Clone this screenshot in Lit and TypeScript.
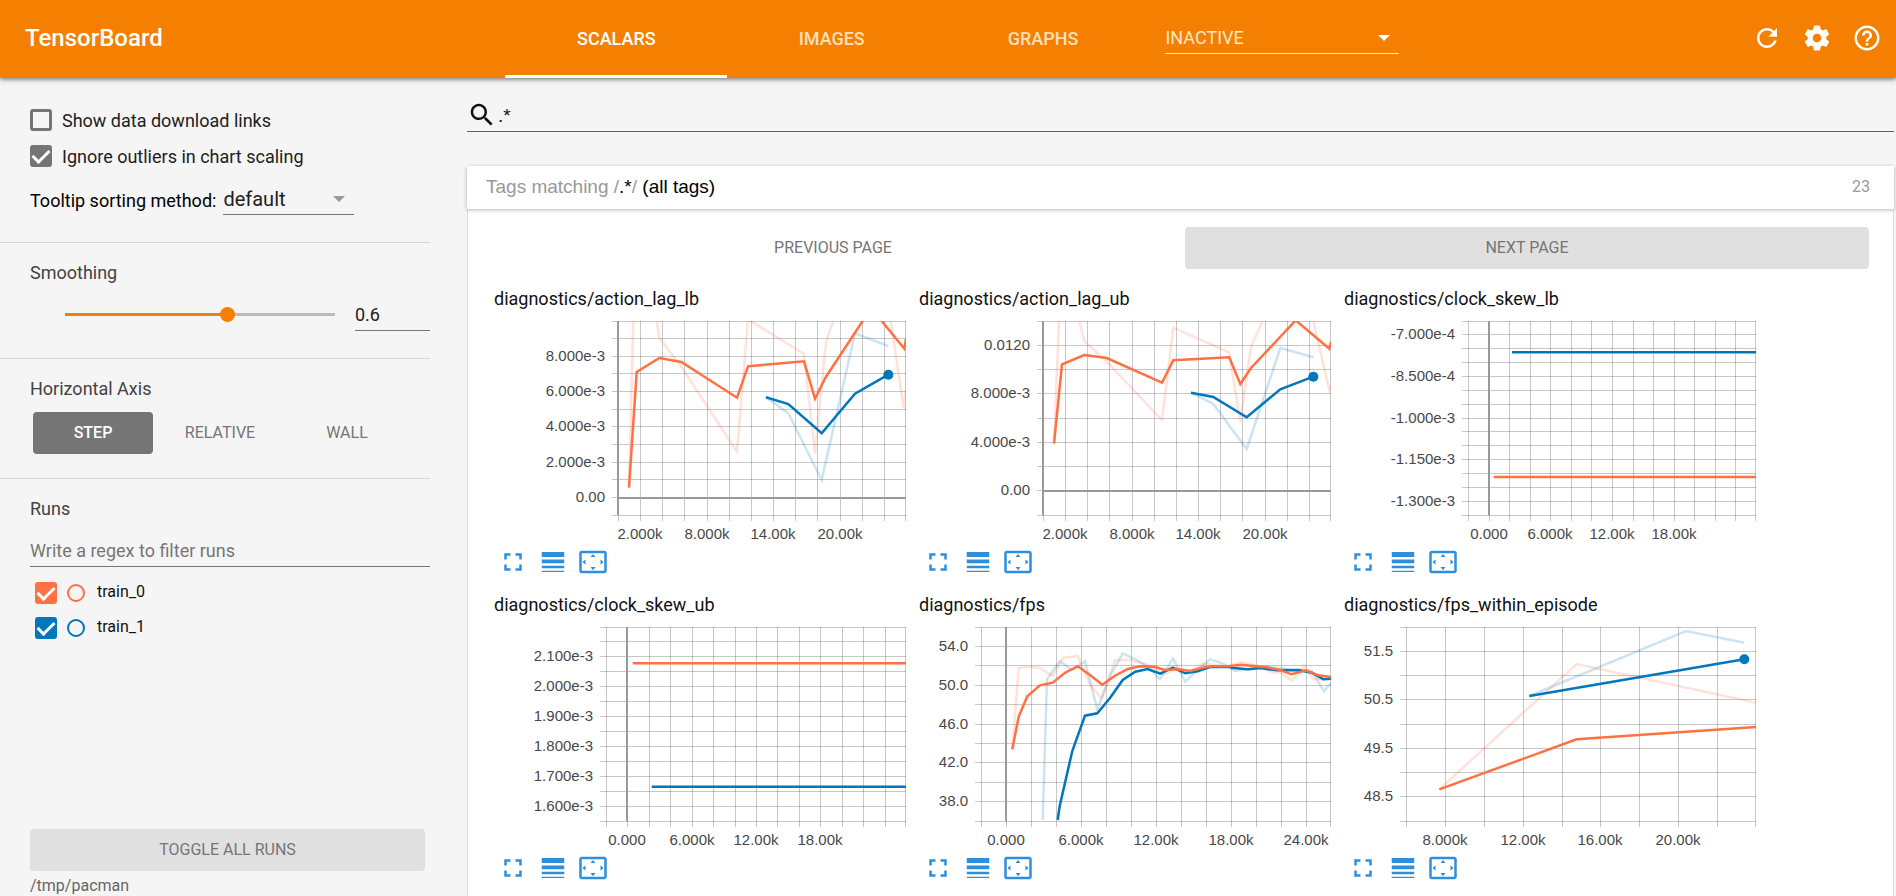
import { LitElement, html, svg, css } from "lit";
import { customElement, property } from "lit/decorators.js";
import { styleMap } from "lit/directives/style-map.js";

type Point = [number, number];

interface Series {
  color: string;
  /** Smoothed line, in thirds of a pixel from the plot frame. */
  line: Point[];
  /** Unsmoothed line, drawn faded under the smoothed one. */
  raw?: Point[];
  dot?: boolean;
}

interface Axis {
  steps: number;
  labels: Record<number, string>;
  zero?: number;
}

interface Chart {
  tag: string;
  left: number;
  origin: Point;
  x: Axis;
  y: Axis;
  series: Series[];
}

const ORANGE = "#ff7043";
const BLUE = "#0077bb";
const PLOT_RIGHT = 413;
const PLOT_TOP = 9;
const PLOT_BOTTOM = 203;

const ROW_LABELS = { 1: "2.000k", 4: "8.000k", 7: "14.00k", 10: "20.00k" };

const CHARTS: Chart[] = [
  {
    tag: "diagnostics/action_lag_lb",
    left: 125,
    origin: [69, 153],
    x: { steps: 13, labels: ROW_LABELS, zero: 0 },
    y: { steps: 11, labels: { 2: "8.000e-3", 4: "6.000e-3", 6: "4.000e-3", 8: "2.000e-3", 10: "0.00" }, zero: 10 },
    series: [
      {
        color: BLUE,
        line: [[888, 382], [955, 402], [1055, 490], [1155, 371], [1255, 314]],
        raw: [[888, 382], [955, 430], [1055, 630], [1155, 190], [1255, 228]],
        dot: true,
      },
      {
        color: ORANGE,
        line: [[477, 653], [500, 306], [568, 264], [634, 276], [801, 383], [834, 289], [1002, 274], [1035, 386], [1068, 320], [1178, 153], [1203, 114], [1235, 153], [1303, 236], [1308, 207]],
        raw: [[477, 653], [490, 153], [500, -200], [560, 153], [568, 203], [634, 290], [801, 545], [834, 148], [1002, 252], [1035, 550], [1068, 215], [1090, 153], [1170, -60], [1235, -60], [1262, 153], [1301, 415], [1308, 360]],
      },
    ],
  },
  {
    tag: "diagnostics/action_lag_ub",
    left: 125,
    origin: [54, 153],
    x: { steps: 13, labels: ROW_LABELS, zero: 0 },
    y: { steps: 8, labels: { 1: "0.0120", 3: "8.000e-3", 5: "4.000e-3", 7: "0.00" }, zero: 7 },
    series: [
      {
        color: BLUE,
        line: [[873, 368], [940, 381], [1040, 442], [1141, 358], [1240, 320]],
        raw: [[873, 368], [940, 402], [1040, 537], [1141, 234], [1240, 262]],
        dot: true,
      },
      {
        color: ORANGE,
        line: [[462, 521], [486, 283], [553, 255], [620, 264], [786, 338], [820, 271], [988, 262], [1021, 342], [1053, 294], [1187, 151], [1288, 236], [1293, 215]],
        raw: [[462, 521], [477, 153], [486, -100], [538, 153], [553, 213], [620, 275], [786, 450], [820, 173], [987, 247], [1021, 455], [1053, 230], [1088, 153], [1187, -60], [1240, 153], [1288, 360], [1293, 345]],
      },
    ],
  },
  {
    tag: "diagnostics/clock_skew_lb",
    left: 125,
    origin: [39, 153],
    x: { steps: 14, labels: { 1: "0.000", 4: "6.000k", 7: "12.00k", 10: "18.00k" }, zero: 1 },
    y: { steps: 14, labels: { 1: "-7.000e-4", 4: "-8.500e-4", 7: "-1.000e-3", 10: "-1.150e-3", 13: "-1.300e-3" } },
    series: [
      { color: BLUE, line: [[546, 247], [1278, 247]] },
      { color: ORANGE, line: [[491, 621], [1278, 621]] },
    ],
  },
  {
    tag: "diagnostics/clock_skew_ub",
    left: 113,
    origin: [69, 143],
    x: { steps: 14, labels: { 1: "0.000", 4: "6.000k", 7: "12.00k", 10: "18.00k" }, zero: 1 },
    y: { steps: 13, labels: { 2: "2.100e-3", 4: "2.000e-3", 6: "1.900e-3", 8: "1.800e-3", 10: "1.700e-3", 12: "1.600e-3" } },
    series: [
      { color: BLUE, line: [[545, 622], [1308, 622]] },
      { color: ORANGE, line: [[488, 252], [1308, 252]] },
    ],
  },
  {
    tag: "diagnostics/fps",
    left: 63,
    origin: [54, 143],
    x: { steps: 14, labels: { 1: "0.000", 4: "6.000k", 7: "12.00k", 10: "18.00k", 13: "24.00k" }, zero: 1 },
    y: { steps: 10, labels: { 1: "54.0", 3: "50.0", 5: "46.0", 7: "42.0", 9: "38.0" } },
    series: [
      {
        color: BLUE,
        line: [[473, 722], [479, 680], [517, 515], [555, 409], [592, 402], [630, 356], [668, 302], [706, 277], [743, 269], [781, 283], [818, 265], [856, 282], [893, 276], [930, 263], [985, 262], [1000, 266], [1045, 270], [1080, 266], [1130, 273], [1195, 272], [1235, 280], [1270, 300], [1293, 298]],
        raw: [[428, 722], [441, 300], [479, 246], [517, 272], [555, 246], [592, 390], [630, 290], [668, 222], [706, 240], [743, 262], [780, 300], [819, 238], [856, 307], [893, 272], [930, 240], [968, 252], [1005, 275], [1100, 262], [1180, 272], [1235, 275], [1272, 336], [1293, 310]],
      },
      {
        color: ORANGE,
        line: [[337, 510], [356, 412], [382, 351], [420, 318], [458, 310], [495, 280], [533, 261], [570, 287], [607, 316], [645, 289], [684, 269], [720, 261], [762, 262], [795, 272], [833, 270], [870, 275], [908, 265], [935, 261], [985, 261], [1023, 256], [1060, 260], [1100, 264], [1140, 272], [1175, 285], [1218, 273], [1255, 288], [1293, 293]],
        raw: [[337, 510], [356, 266], [382, 262], [418, 265], [458, 290], [490, 235], [533, 230], [570, 315], [605, 358], [645, 243], [690, 242], [740, 255], [795, 285], [833, 265], [870, 278], [908, 253], [985, 261], [1023, 248], [1080, 262], [1120, 280], [1140, 278], [1175, 304], [1213, 258], [1240, 300], [1293, 298]],
      },
    ],
  },
  {
    tag: "diagnostics/fps_within_episode",
    left: 63,
    origin: [39, 143],
    x: { steps: 9, labels: { 1: "8.000k", 3: "12.00k", 5: "16.00k", 7: "20.00k" } },
    y: { steps: 8, labels: { 1: "51.5", 3: "50.5", 5: "49.5", 7: "48.5" } },
    series: [
      {
        color: BLUE,
        line: [[598, 350], [1243, 240]],
        raw: [[598, 350], [1068, 155], [1243, 190]],
        dot: true,
      },
      {
        color: ORANGE,
        line: [[328, 630], [740, 480], [1278, 443]],
        raw: [[328, 630], [740, 254], [1278, 370]],
      },
    ],
  },
];

const ICONS = {
  refresh:
    "M17.65 6.35C16.2 4.9 14.21 4 12 4c-4.42 0-7.99 3.58-7.99 8s3.57 8 7.99 8c3.73 0 6.84-2.55 7.73-6h-2.08c-.82 2.33-3.04 4-5.65 4-3.31 0-6-2.69-6-6s2.69-6 6-6c1.66 0 3.14.69 4.22 1.78L13 11h7V4l-2.35 2.35z",
  settings:
    "M19.43 12.98c.04-.32.07-.64.07-.98s-.03-.66-.07-.98l2.11-1.65c.19-.15.24-.42.12-.64l-2-3.46c-.12-.22-.39-.3-.61-.22l-2.49 1c-.52-.4-1.08-.73-1.69-.98l-.38-2.65C14.46 2.18 14.25 2 14 2h-4c-.25 0-.46.18-.49.42l-.38 2.65c-.61.25-1.17.59-1.69.98l-2.49-1c-.23-.09-.49 0-.61.22l-2 3.46c-.13.22-.07.49.12.64l2.11 1.65c-.04.32-.07.65-.07.98s.03.66.07.98l-2.11 1.65c-.19.15-.24.42-.12.64l2 3.46c.12.22.39.3.61.22l2.49-1c.52.4 1.08.73 1.69.98l.38 2.65c.03.24.24.42.49.42h4c.25 0 .46-.18.49-.42l.38-2.65c.61-.25 1.17-.59 1.69-.98l2.49 1c.23.09.49 0 .61-.22l2-3.46c.12-.22.07-.49-.12-.64l-2.11-1.65zM12 15.5c-1.93 0-3.5-1.57-3.5-3.5s1.57-3.5 3.5-3.5 3.5 1.57 3.5 3.5-1.57 3.5-3.5 3.5z",
  help:
    "M11 18h2v-2h-2v2zm1-16C6.48 2 2 6.48 2 12s4.48 10 10 10 10-4.48 10-10S17.52 2 12 2zm0 18c-4.41 0-8-3.59-8-8s3.59-8 8-8 8 3.59 8 8-3.59 8-8 8zm0-14c-2.21 0-4 1.79-4 4h2c0-1.1.9-2 2-2s2 .9 2 2c0 2-3 1.75-3 5h2c0-2.25 3-2.5 3-5 0-2.21-1.79-4-4-4z",
  search:
    "M15.5 14h-.79l-.28-.27C15.41 12.59 16 11.11 16 9.5 16 5.91 13.09 3 9.5 3S3 5.91 3 9.5 5.91 16 9.5 16c1.61 0 3.09-.59 4.23-1.57l.27.28v.79l5 4.99L20.49 19l-4.99-5zm-6 0C7.01 14 5 11.99 5 9.5S7.01 5 9.5 5 14 7.01 14 9.5 11.99 14 9.5 14z",
  fullscreen:
    "M7 14H5v5h5v-2H7v-3zm-2-4h2V7h3V5H5v5zm12 7h-3v2h5v-5h-2v3zM14 5v2h3v3h2V5h-5z",
  lines:
    "M3 17h18v-2H3v2zm0 3h18v-1H3v1zm0-7h18v-3H3v3zm0-9v4h18V4H3z",
  overscan:
    "M12.01 5.5L10 8h4l-1.99-2.5zM18 10v4l2.5-1.99L18 10zM6 10l-2.5 2.01L6 14v-4zm8 6h-4l2.01 2.5L14 16zm7-13H3c-1.1 0-2 .9-2 2v14c0 1.1.9 2 2 2h18c1.1 0 2-.9 2-2V5c0-1.1-.9-2-2-2zm0 16.01H3V4.99h18v14.02z",
};

const icon = (d: string) =>
  html`<svg class="icon" viewBox="0 0 24 24" aria-hidden="true"><path d=${d}></path></svg>`;

const base = css`
  * {
    box-sizing: border-box;
  }
  button,
  input,
  select {
    font: inherit;
    color: inherit;
    margin: 0;
    padding: 0;
    border: 0;
    border-radius: 0;
    background: none;
    outline: none;
  }
  .icon {
    display: block;
    width: 30px;
    height: 30px;
    fill: currentColor;
  }
`;

@customElement("scalar-chart")
export class ScalarChart extends LitElement {
  @property({ attribute: false }) chart!: Chart;

  static styles = [
    base,
    css`
      :host {
        display: block;
        width: 413px;
      }
      .title {
        margin: 0;
        padding-left: 1px;
        font-size: 18px;
        font-weight: 400;
        line-height: 26px;
        color: #111;
      }
      .plot {
        display: block;
        width: 413px;
        height: 230px;
      }
      .grid {
        stroke: #000;
        stroke-opacity: 0.22;
        shape-rendering: crispEdges;
      }
      .zero {
        stroke: #999;
        stroke-width: 2;
        shape-rendering: crispEdges;
      }
      .line {
        fill: none;
        stroke-width: 2.5;
      }
      .raw {
        fill: none;
        stroke-width: 2.5;
        stroke-opacity: 0.2;
      }
      .tick {
        font-family: "Liberation Sans", Arial, sans-serif;
        font-size: 15px;
        fill: #484848;
      }
      .y {
        text-anchor: end;
      }
      .x {
        text-anchor: middle;
      }
      .tools {
        display: flex;
        color: #2e8fdd;
      }
      .tool {
        padding: 5px;
      }
    `,
  ];

  private path(points: Point[]) {
    const [ox, oy] = this.chart.origin;
    return points
      .map(([x, y]) => `${((x - ox) / 3).toFixed(1)},${((y - oy) / 3 + PLOT_TOP).toFixed(1)}`)
      .join(" ");
  }

  render() {
    const { tag, left, x, y, series, origin } = this.chart;
    const xs = Array.from({ length: x.steps + 1 }, (_, i) =>
      Math.min(Math.round(left + ((PLOT_RIGHT - left) * i) / x.steps) + 0.5, PLOT_RIGHT - 0.5));
    const ys = Array.from({ length: y.steps + 1 }, (_, i) =>
      Math.floor(PLOT_TOP + ((PLOT_BOTTOM - PLOT_TOP) * i) / y.steps) + 0.5);
    return html`
      <h3 class="title">${tag}</h3>
      <svg class="plot" viewBox="0 0 413 230" role="img" aria-label=${tag}>
        <clipPath id="frame">
          <rect x=${left} y=${PLOT_TOP} width=${PLOT_RIGHT - left} height=${PLOT_BOTTOM - PLOT_TOP}></rect>
        </clipPath>
        ${xs.map((v) => svg`<line class="grid" x1=${v} x2=${v} y1=${PLOT_TOP} y2=${PLOT_BOTTOM + 6}></line>`)}
        ${ys.map((v) => svg`<line class="grid" x1=${left - 6} x2=${PLOT_RIGHT} y1=${v} y2=${v}></line>`)}
        ${x.zero === undefined ? "" : svg`<line class="zero" x1=${xs[x.zero] - 0.5} x2=${xs[x.zero] - 0.5} y1=${PLOT_TOP} y2=${PLOT_BOTTOM}></line>`}
        ${y.zero === undefined ? "" : svg`<line class="zero" x1=${left} x2=${PLOT_RIGHT} y1=${ys[y.zero] + 0.5} y2=${ys[y.zero] + 0.5}></line>`}
        <g clip-path="url(#frame)">
          ${series.map((s) => (s.raw ? svg`<polyline class="raw" stroke=${s.color} points=${this.path(s.raw)}></polyline>` : ""))}
          ${series.map((s) => svg`<polyline class="line" stroke=${s.color} points=${this.path(s.line)}></polyline>`)}
        </g>
        ${series.filter((s) => s.dot).map((s) => {
          const [px, py] = s.line[s.line.length - 1];
          return svg`<circle r="5" fill=${s.color} cx=${(px - origin[0]) / 3} cy=${(py - origin[1]) / 3 + PLOT_TOP}></circle>`;
        })}
        ${Object.entries(y.labels).map(([i, t]) => svg`<text class="tick y" x=${left - 13} y=${ys[+i] + 4.5}>${t}</text>`)}
        ${Object.entries(x.labels).map(([i, t]) => svg`<text class="tick x" x=${xs[+i] - 0.5} y="227">${t}</text>`)}
      </svg>
      <div class="tools">
        <button class="tool" aria-label="Toggle full size">${icon(ICONS.fullscreen)}</button>
        <button class="tool" aria-label="Toggle y-axis log scale">${icon(ICONS.lines)}</button>
        <button class="tool" aria-label="Fit domain to data">${icon(ICONS.overscan)}</button>
      </div>
    `;
  }
}

@customElement("app-root")
export class AppRoot extends LitElement {
  static styles = [
    base,
    css`
      :host {
        display: flex;
        flex-direction: column;
        height: 100vh;
        overflow: hidden;
        background: #f5f5f5;
        color: #212121;
        font-family: Roboto, sans-serif;
        font-size: 18px;
      }

      .toolbar {
        display: flex;
        flex: none;
        align-items: stretch;
        height: 78px;
        padding-right: 4px;
        background: #f57f00;
        color: #fff;
        box-shadow: 0 1px 5px rgba(0, 0, 0, 0.6);
        z-index: 1;
      }
      .brand {
        flex: none;
        width: 505px;
        margin: 0;
        padding-left: 25px;
        font-size: 24px;
        font-weight: 500;
        line-height: 77px;
      }
      .tabs {
        display: flex;
      }
      .tab {
        padding: 1px 71px 0 72px;
        border-bottom: 3px solid transparent;
        font-size: 18px;
        font-weight: 500;
        color: #ffe0b8;
      }
      .tab.active {
        color: #fff;
        border-bottom-color: #fff;
      }
      .pick {
        position: relative;
        display: block;
      }
      .pick::after {
        content: "";
        position: absolute;
        right: 9px;
        top: 50%;
        margin-top: -3px;
        border: 6px solid transparent;
        border-top-color: currentColor;
        border-bottom: 0;
        pointer-events: none;
      }
      .pick select {
        appearance: none;
        display: block;
        width: 100%;
        border-bottom: 1px solid currentColor;
      }
      .inactive {
        align-self: flex-start;
        width: 234px;
        margin: 22px 0 0 16px;
      }
      .inactive select {
        height: 32px;
        font-size: 18px;
        color: #ffe8c8;
      }
      .actions {
        display: flex;
        align-items: center;
        margin-left: auto;
        padding-bottom: 2px;
      }
      .action {
        padding: 10px;
      }

      .content {
        display: flex;
        flex: 1;
        min-height: 0;
      }
      .sidebar {
        display: flex;
        flex-direction: column;
        flex: none;
        width: 430px;
        margin-right: 37px;
      }
      .section {
        padding: 0 0 0 30px;
        border-bottom: 1px solid #d6d6d6;
      }
      .section.options {
        padding-top: 24px;
        height: 165px;
      }
      .section.smoothing {
        height: 116px;
      }
      .section.axis {
        height: 120px;
      }
      .section.runs {
        display: flex;
        flex: 1;
        flex-direction: column;
        border-bottom: 0;
      }
      .check {
        display: flex;
        align-items: center;
        gap: 10px;
        height: 36px;
      }
      .box {
        appearance: none;
        display: grid;
        flex: none;
        place-items: start center;
        width: 22px;
        height: 22px;
        border: 3px solid var(--tint, #757575);
        border-radius: 3px;
      }
      .box:checked {
        background: var(--tint, #757575);
      }
      .box:checked::before {
        content: "";
        width: 7px;
        height: 14px;
        border: solid #fff;
        border-width: 0 3px 3px 0;
        transform: translateY(-2px) rotate(45deg);
      }
      .tooltip {
        display: flex;
        align-items: flex-end;
        gap: 7px;
        height: 41px;
        color: #000;
        line-height: 28px;
      }
      .tooltip .pick {
        width: 131px;
        color: #212121;
      }
      .tooltip .pick select {
        height: 32px;
        border-color: #757575;
        font-size: 20px;
      }
      .tooltip .pick::after {
        color: #999;
      }
      .heading {
        margin: 0;
        padding-top: 16px;
        font-size: 18px;
        font-weight: 400;
        line-height: 28px;
        color: #424242;
      }
      .smooth {
        display: flex;
        align-items: center;
        justify-content: space-between;
        padding-left: 27px;
        height: 55px;
      }
      .slider {
        appearance: none;
        width: 286px;
        height: 20px;
      }
      .slider::-webkit-slider-runnable-track {
        height: 3px;
        background: linear-gradient(
          to right,
          transparent 8px,
          #ef7f10 8px,
          #ef7f10 60%,
          #bbb 60%,
          #bbb calc(100% - 8px),
          transparent calc(100% - 8px)
        );
      }
      .slider::-webkit-slider-thumb {
        appearance: none;
        width: 15px;
        height: 15px;
        margin-top: -6px;
        border-radius: 50%;
        background: #f57f00;
      }
      .amount {
        width: 75px;
        height: 33px;
        border-bottom: 1px solid #757575;
      }
      .modes {
        display: flex;
        gap: 7px;
        padding: 9px 0 0 3px;
      }
      .mode,
      .wide {
        height: 42px;
        padding-bottom: 1px;
        border-radius: 4px;
        font-size: 16px;
        color: #757575;
      }
      .mode {
        width: 120px;
      }
      .mode.active {
        background: #757575;
        color: #fff;
        font-weight: 500;
      }
      .wide {
        background: #e0e0e0;
      }
      .wide.flat {
        background: none;
      }
      .filter {
        width: 100%;
        height: 32px;
        margin-top: 12px;
        border-bottom: 1px solid #757575;
      }
      .filter::placeholder {
        color: #757575;
        opacity: 1;
      }
      .list {
        flex: 1;
        margin: 0;
        padding: 8px 0 0 5px;
        list-style: none;
      }
      .run {
        display: flex;
        align-items: center;
        height: 35px;
        color: #111;
        font-size: 16px;
      }
      .solo {
        width: 18px;
        height: 18px;
        margin: 0 12px 0 10px;
        border: 2px solid var(--tint);
        border-radius: 50%;
      }
      .run label {
        padding-bottom: 3px;
      }
      .toggle {
        flex: none;
        margin-right: 5px;
      }
      .logdir {
        padding-top: 5px;
        font-size: 16px;
        line-height: 20px;
        color: #666;
      }

      .main {
        display: flex;
        flex: 1;
        flex-direction: column;
        min-width: 0;
        margin-right: 2px;
      }
      .search {
        display: flex;
        flex: none;
        align-items: center;
        height: 36px;
        margin-top: 18px;
        border-bottom: 1px solid #616161;
        font-family: "Liberation Sans", Arial, sans-serif;
        font-size: 19px;
        color: #111;
      }
      .search .icon {
        margin-top: 2px;
      }
      .search input {
        flex: 1;
        padding: 4px 0 0 1px;
      }
      .card-head {
        display: flex;
        flex: none;
        align-items: center;
        justify-content: space-between;
        height: 43px;
        margin-top: 34px;
        padding: 0 24px 2px 19px;
        background: #fff;
        box-shadow: 0 1px 4px rgba(0, 0, 0, 0.3);
        color: #999;
        z-index: 1;
      }
      .card-head h2 {
        margin: 0;
        font-family: "Liberation Sans", Arial, sans-serif;
        font-size: 19px;
        font-weight: 400;
      }
      .card-head b {
        font-weight: 400;
        color: #000;
      }
      .count {
        font-size: 16px;
      }
      .card-body {
        flex: 1;
        min-height: 0;
        overflow: hidden;
        padding: 18px 24px 0 23px;
        border: solid #ddd;
        border-width: 0 1px;
        background: #fff;
      }
      .pager {
        display: grid;
        grid-template-columns: 1fr 1fr;
        gap: 10px;
        margin-bottom: 17px;
      }
      .charts {
        display: flex;
        flex-wrap: wrap;
        gap: 10px 12px;
        padding-left: 2px;
      }
    `,
  ];

  private run(name: string, tint: string) {
    return html`
      <li class="run" style=${styleMap({ "--tint": tint })}>
        <input class="box" type="checkbox" id=${name} checked />
        <button class="solo" aria-label="Show only ${name}"></button>
        <label for=${name}>${name}</label>
      </li>
    `;
  }

  render() {
    return html`
      <header class="toolbar">
        <h1 class="brand">TensorBoard</h1>
        <nav class="tabs">
          <button class="tab active">SCALARS</button>
          <button class="tab">IMAGES</button>
          <button class="tab">GRAPHS</button>
        </nav>
        <label class="pick inactive">
          <select aria-label="Inactive dashboards"><option>INACTIVE</option></select>
        </label>
        <div class="actions">
          <button class="action" aria-label="Refresh">${icon(ICONS.refresh)}</button>
          <button class="action" aria-label="Settings">${icon(ICONS.settings)}</button>
          <button class="action" aria-label="Help">${icon(ICONS.help)}</button>
        </div>
      </header>
      <div class="content">
        <aside class="sidebar">
          <section class="section options">
            <label class="check"><input class="box" type="checkbox" />Show data download links</label>
            <label class="check"><input class="box" type="checkbox" checked />Ignore outliers in chart scaling</label>
            <div class="tooltip">
              <label for="sorting">Tooltip sorting method:</label>
              <span class="pick"><select id="sorting"><option>default</option></select></span>
            </div>
          </section>
          <section class="section smoothing">
            <h2 class="heading">Smoothing</h2>
            <div class="smooth">
              <input class="slider" type="range" min="0" max="1" step="0.1" value="0.6" aria-label="Smoothing" />
              <input class="amount" type="text" value="0.6" aria-label="Smoothing value" />
            </div>
          </section>
          <section class="section axis">
            <h2 class="heading">Horizontal Axis</h2>
            <div class="modes">
              <button class="mode active">STEP</button>
              <button class="mode">RELATIVE</button>
              <button class="mode">WALL</button>
            </div>
          </section>
          <section class="section runs">
            <h2 class="heading">Runs</h2>
            <input class="filter" type="text" placeholder="Write a regex to filter runs" aria-label="Filter runs" />
            <ul class="list">
              ${this.run("train_0", ORANGE)} ${this.run("train_1", BLUE)}
            </ul>
            <button class="wide toggle">TOGGLE ALL RUNS</button>
            <div class="logdir">/tmp/pacman</div>
          </section>
        </aside>
        <main class="main">
          <label class="search">
            ${icon(ICONS.search)}
            <input type="text" value=".*" aria-label="Filter tags" />
          </label>
          <div class="card-head">
            <h2>Tags matching /<b>.*</b>/ <b>(all tags)</b></h2>
            <span class="count">23</span>
          </div>
          <div class="card-body">
            <div class="pager">
              <button class="wide flat">PREVIOUS PAGE</button>
              <button class="wide">NEXT PAGE</button>
            </div>
            <div class="charts">
              ${CHARTS.map((chart) => html`<scalar-chart .chart=${chart}></scalar-chart>`)}
            </div>
          </div>
        </main>
      </div>
    `;
  }
}
